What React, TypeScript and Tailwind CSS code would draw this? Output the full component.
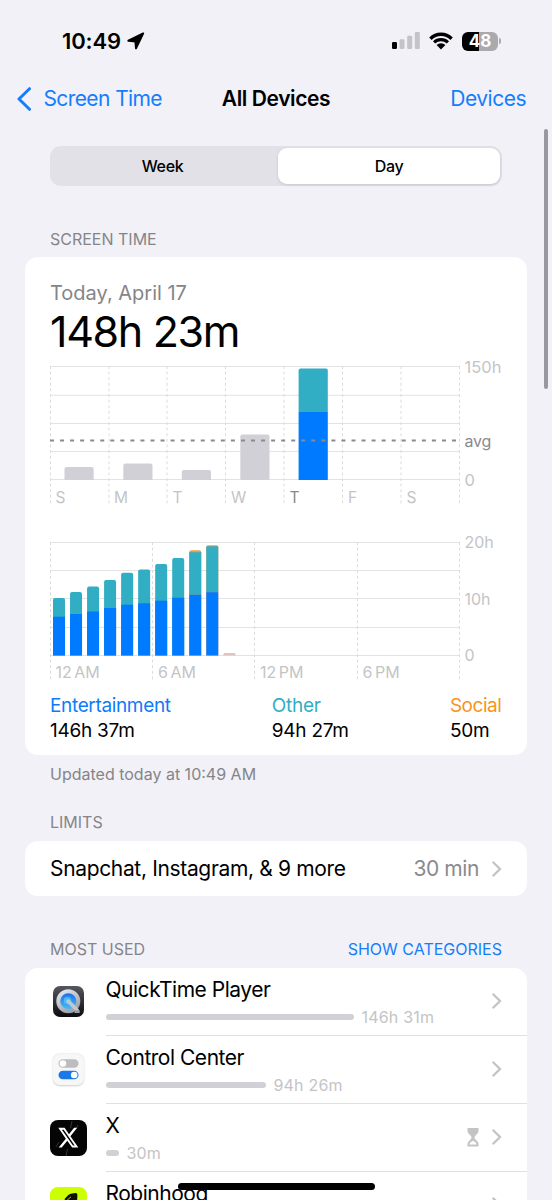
import type { ReactNode } from 'react';
import clsx from 'clsx';

const weekBars = [
  { x: 14.5, top: 107 },
  { x: 73.3, top: 103.5 },
  { x: 131.8, top: 110 },
  { x: 190.3, top: 74.5 },
];

const dayLabels = ['S', 'M', 'T', 'W', 'T', 'F', 'S'];

// top of the teal part, top of the blue part, height of the orange cap
const hourBars = [
  [62, 80.7, 0],
  [56, 78, 0],
  [50.5, 75.5, 0],
  [44, 72, 0],
  [36.8, 68.7, 0],
  [33.5, 67.3, 0],
  [28, 64.7, 0],
  [22, 61.7, 0],
  [14.2, 58.7, 2],
  [9.3, 56.2, 1],
];

function Chevron() {
  return (
    <svg width="10" height="16" viewBox="0 0 10 16" fill="none" className="shrink-0">
      <path d="M1.4 1.5L8.1 8L1.4 14.5" stroke="#c4c4c7" strokeWidth="2.4" strokeLinecap="round" strokeLinejoin="round" />
    </svg>
  );
}

function StatusBar() {
  return (
    <div className="flex h-[72px] items-center justify-between pt-[10px] pr-[51px] pl-[62px]">
      <div className="flex items-center gap-[6px]">
        <span className="text-[22px] leading-none font-semibold tracking-[-0.1px]">10:49</span>
        <svg width="18" height="18" viewBox="0 0 18 18">
          <path
            d="M16.2 1.4L1.4 8.7L8.4 9.4L9 16.3Z"
            fill="#000"
            stroke="#000"
            strokeWidth="2"
            strokeLinejoin="round"
          />
        </svg>
      </div>
      <div className="flex items-center">
        <svg width="28" height="18" viewBox="0 0 28 18">
          <rect x="0" y="10" width="5" height="7" rx="1.2" />
          <rect x="7.5" y="7.3" width="5" height="9.7" rx="1.2" fill="#c3c3c8" />
          <rect x="15.2" y="3.7" width="5" height="13.3" rx="1.2" fill="#c3c3c8" />
          <rect x="22.8" y="0" width="5" height="17" rx="1.2" fill="#c3c3c8" />
        </svg>
        <svg width="24" height="18" viewBox="0 0 24 18" fill="none" className="ml-[9px]">
          <path d="M1.4 6.7A15 15 0 0 1 22.6 6.7" stroke="#000" strokeWidth="3.4" />
          <path d="M5.1 10.4A9.8 9.8 0 0 1 18.9 10.4" stroke="#000" strokeWidth="3.2" />
          <path d="M7.6 13A6.2 6.2 0 0 1 16.4 13L12 17.4Z" fill="#000" />
        </svg>
        <div className="ml-[9px] h-[19px] w-[36px] rounded-[6px] bg-linear-to-r from-black from-48% to-[#a9a9ae] to-48% text-center text-[17px] leading-[19px] font-bold text-white">
          48
        </div>
        <div className="ml-[1px] h-[6px] w-[2px] rounded-r-full bg-[#a9a9ae]" />
      </div>
    </div>
  );
}

function WeekChart() {
  return (
    <svg width="452" height="150" viewBox="0 0 452 150" className="block overflow-visible">
      {[6.5, 35.3, 63.5, 91.5, 119.5].map((y) => (
        <path key={y} d={`M0 ${y}H410`} stroke="#e3e3e5" />
      ))}
      {[0.5, 59, 117, 175.5, 234, 292.5, 351, 409.5].map((x) => (
        <path key={x} d={`M${x} 6V145`} stroke="#dcdcde" strokeDasharray="3 2.6" />
      ))}
      {weekBars.map((bar) => (
        <path key={bar.x} d={`M${bar.x} 120V${bar.top + 2}q0 -2 2 -2h25.2q2 0 2 2V120Z`} fill="#d1d0d7" />
      ))}
      <path d="M248.6 52V10.5q0-2 2-2h25.2q2 0 2 2V52Z" fill="#31aec4" />
      <path d="M248.6 52h29.2v68h-29.2Z" fill="#007aff" />
      <path d="M0 80.5H407" stroke="#8a8a8e" strokeWidth="1.9" strokeDasharray="4 6.05" />
      {dayLabels.map((label, i) => (
        <text
          key={i}
          x={5.5 + i * 58.5}
          y="142.8"
          className={clsx('text-[15.5px]', i === 4 ? 'fill-[#8a8a8e]' : 'fill-[#c4c4c6]')}
        >
          {label}
        </text>
      ))}
      <g className="fill-[#c4c4c6] text-[16.5px]">
        <text x="414.5" y="13">150h</text>
        <text x="414.5" y="126">0</text>
      </g>
      <text x="414.5" y="86.5" className="fill-[#8a8a8e] text-[16px] tracking-[-0.2px]">avg</text>
    </svg>
  );
}

function HourChart() {
  return (
    <svg width="452" height="150" viewBox="0 0 452 150" className="block overflow-visible">
      {[6.5, 34.5, 62.5, 91.5, 119.5].map((y) => (
        <path key={y} d={`M0 ${y}H410`} stroke="#e3e3e5" />
      ))}
      {[0.5, 102.5, 204.5, 307.5, 409.5].map((x) => (
        <path key={x} d={`M${x} 6V144`} stroke="#dcdcde" strokeDasharray="3 2.6" />
      ))}
      {hourBars.map(([top, mid, cap], i) => {
        const x = 3 + i * 17.03;
        return (
          <g key={i}>
            <path
              d={`M${x} 119.5V${top + 2}q0 -2 2 -2h8q2 0 2 2V119.5Z`}
              fill={cap ? '#f39a4a' : '#31aec4'}
            />
            {cap > 0 && <rect x={x} y={top + cap} width="12" height={mid - top - cap} fill="#31aec4" />}
            <rect x={x} y={mid} width="12" height={119.5 - mid} fill="#007aff" />
          </g>
        );
      })}
      <path d="M173.3 119.5v-.8q0-1.7 1.7-1.7h9q1.7 0 1.7 1.7v.8Z" fill="#e0c4bb" />
      <g className="fill-[#c4c4c6] text-[16px] [word-spacing:-2px]">
        <text x="5.5" y="142.3">12 AM</text>
        <text x="108" y="142.3">6 AM</text>
        <text x="210" y="142.3">12 PM</text>
        <text x="312.5" y="142.3">6 PM</text>
      </g>
      <g className="fill-[#c4c4c6] text-[16px]">
        <text x="414.5" y="12.3">20h</text>
        <text x="414.5" y="68.6">10h</text>
        <text x="414.5" y="125.3">0</text>
      </g>
    </svg>
  );
}

function QuickTimeIcon() {
  return (
    <svg width="31" height="31" viewBox="0 0 31 31">
      <defs>
        <linearGradient id="qt-bg" x1="0" y1="0" x2="0" y2="1">
          <stop offset="0" stopColor="#56585f" />
          <stop offset="1" stopColor="#0b0b0e" />
        </linearGradient>
        <linearGradient id="qt-ring" x1="0" y1="0" x2="0.6" y2="1">
          <stop offset="0" stopColor="#e6eaf0" />
          <stop offset="1" stopColor="#a0a3a9" />
        </linearGradient>
        <linearGradient id="qt-core" x1="0" y1="0" x2="0" y2="1">
          <stop offset="0" stopColor="#1668e8" />
          <stop offset="1" stopColor="#4cc4f7" />
        </linearGradient>
      </defs>
      <rect width="31" height="31" rx="7" fill="url(#qt-bg)" />
      <circle cx="15.3" cy="15.2" r="10" fill="url(#qt-core)" stroke="url(#qt-ring)" strokeWidth="4" />
      <circle cx="14.5" cy="14.5" r="3.8" fill="#62d4fb" opacity=".6" />
      <path d="M15.2 15.2L24 24" stroke="#c3c6cc" strokeWidth="3.8" strokeLinecap="round" />
      <path d="M21.5 25.6h5.2" stroke="#9a9ca2" strokeWidth="2.6" />
    </svg>
  );
}

function ControlCenterIcon() {
  return (
    <svg width="31" height="31" viewBox="0 0 31 31" className="rounded-[7px] bg-[#f7f7f8] shadow-[0_0.5px_2px_rgba(0,0,0,0.2)]">
      <rect x="5.5" y="5.3" width="20" height="8.5" rx="4.25" fill="#bdbdbf" />
      <circle cx="9.9" cy="9.55" r="3.3" fill="#fff" />
      <rect x="5.5" y="16.7" width="20" height="8.5" rx="4.25" fill="#1a78e8" />
      <circle cx="21.2" cy="20.95" r="3.3" fill="#fff" />
    </svg>
  );
}

function XIcon() {
  return (
    <svg width="37" height="36" viewBox="0 0 37 36">
      <rect width="37" height="36" rx="8" fill="#050505" />
      <path d="M22 1L20.5 8M16 36L17.5 29M28 5L26 9M6 27L9 22" stroke="#555" strokeWidth=".6" />
      <path
        transform="translate(7.1 5.6) scale(0.93 1.01)"
        fill="#fff"
        fillRule="evenodd"
        d="M18.244 2.25h3.308l-7.227 8.26 8.502 11.24H16.17l-5.214-6.817L4.99 21.75H1.68l7.73-8.835L1.254 2.25H8.08l4.713 6.231zm-1.161 17.52h1.833L7.084 4.126H5.117z"
      />
    </svg>
  );
}

function RobinhoodIcon() {
  return (
    <svg width="37" height="37" viewBox="0 0 37 37">
      <rect width="37" height="37" rx="8" fill="#ccff00" />
      <path d="M15 11.5L18.3 7.9Q19.8 6.6 22 6.4L25.8 6.1Q27.6 6.3 27.4 8.6L27 16L20 22L12 31Q12.500 20 15 11.500Z" fill="#110e08" />
      <path d="M21 9.8Q16.500 12 13.500 20" fill="none" stroke="#ccff00" strokeWidth=".8" />
    </svg>
  );
}

function Hourglass() {
  return (
    <svg width="12" height="19" viewBox="0 0 12 19" fill="none">
      <path
        d="M.5 0H11.5V3C11.5 6.2 7.5 7.2 7.5 9.5C7.5 11.8 11.5 12.8 11.5 16V18.5H.5V16C.5 12.8 4.5 11.8 4.5 9.5C4.5 7.2 .5 6.2 .5 3Z"
        fill="#c4c4c7"
      />
      <path d="M2.5 16.5C2.5 14.5 4.5 14 6 12.8C7.5 14 9.5 14.5 9.5 16.5Z" fill="#fff" />
    </svg>
  );
}

type AppRowProps = {
  icon: ReactNode;
  name: string;
  barClass: string;
  time?: string;
  limited?: boolean;
};

function AppRow({ icon, name, barClass, time, limited }: AppRowProps) {
  return (
    <div className="flex h-[67.9px] shrink-0 pl-[25px]">
      <div className="flex w-[37px] shrink-0 items-center justify-center">{icon}</div>
      <div className="ml-[18.5px] flex flex-1 items-center border-b border-[#e0e0e2] pr-[25px]">
        <div className="flex h-full flex-1 flex-col pt-[8px]">
          <div className="text-[21px] leading-[28px] tracking-[-0.48px]">{name}</div>
          <div className="flex h-[26px] items-center gap-[8px]">
            <div className={clsx('h-[6px] rounded-full bg-[#d1d0d7]', barClass)} />
            <span className="text-[16px] leading-none tracking-[0.18px] text-[#c4c4c6]">{time}</span>
          </div>
        </div>
        <div className="flex items-center gap-[13px]">
          {limited && <Hourglass />}
          <Chevron />
        </div>
      </div>
    </div>
  );
}

export default function App() {
  return (
    <div className="relative h-[1200px] w-[552px] overflow-hidden bg-[#f2f1f8] font-['Inter',sans-serif] text-black">
      <StatusBar />

      <div className="flex h-[53px] items-center pr-[26px] pl-[16.5px] text-[21px] tracking-[-0.5px]">
        <div className="flex w-[184.5px] items-center gap-[12px] text-[#147efb]">
          <svg width="15" height="24" viewBox="0 0 15 24" fill="none">
            <path d="M12.5 1.7L2 12L12.5 22.3" stroke="#147efb" strokeWidth="3" strokeLinecap="round" strokeLinejoin="round" />
          </svg>
          <span className="whitespace-nowrap tracking-[-0.6px]">Screen Time</span>
        </div>
        <div className="flex-1 text-center font-semibold tracking-[-0.4px]">All Devices</div>
        <div className="w-[175px] text-right text-[#147efb]">Devices</div>
      </div>

      <div className="mx-[50px] mt-[21px] flex h-[40px] rounded-[11px] bg-[#e2e1e7] p-[2px] text-[16px] font-medium tracking-[-0.35px]">
        <div className="w-[226px] pr-[5px] text-center leading-[36px]">Week</div>
        <div className="flex-1 rounded-[9px] bg-white text-center leading-[36px] shadow-[0_1px_3px_rgba(0,0,0,0.12)]">Day</div>
      </div>

      <div className="mt-[42px] pl-[50px] text-[16px] leading-[22px] text-[#858589]">SCREEN TIME</div>

      <div className="mx-[25px] mt-[7px] h-[498px] rounded-[13px] bg-white pt-[22px] pl-[25px]">
        <div className="text-[20px] leading-[28px] text-[#858589]">Today, April 17</div>
        <div className="text-[43px] leading-[48px] tracking-[-1.35px]">148h 23m</div>
        <div className="mt-[5px]">
          <WeekChart />
        </div>
        <div className="mt-[26px]">
          <HourChart />
        </div>
        <div className="mt-[7px] mr-[25.5px] flex justify-between text-[19px] leading-[25px] tracking-[-0.25px]">
          <div>
            <div className="tracking-[-0.35px] text-[#0f7bfb]">Entertainment</div>
            <div>146h 37m</div>
          </div>
          <div>
            <div className="text-[#31aec4]">Other</div>
            <div>94h 27m</div>
          </div>
          <div>
            <div className="tracking-[-0.45px] text-[#f7941d]">Social</div>
            <div>50m</div>
          </div>
        </div>
      </div>

      <div className="mt-[8px] pl-[50px] text-[16px] leading-[22px] text-[#858589]">
        Updated today at 10:49 AM
      </div>

      <div className="mt-[26px] pl-[50px] text-[16px] leading-[22px] text-[#858589]">LIMITS</div>
      <div className="mx-[25px] mt-[8px] flex h-[55px] items-center rounded-[13px] bg-white px-[25px] text-[21px]">
        <div className="flex-1 tracking-[-0.34px]">Snapchat, Instagram, &amp; 9 more</div>
        <div className="mr-[13px] tracking-[-0.4px] text-[#8a8a8e]">30 min</div>
        <Chevron />
      </div>

      <div className="mx-[50px] mt-[42px] flex justify-between text-[16px] leading-[22px] text-[#858589]">
        <div>MOST USED</div>
        <div className="text-[#147efb]">SHOW CATEGORIES</div>
      </div>
      <div className="mx-[25px] mt-[8px] flex h-[232px] flex-col overflow-hidden rounded-t-[13px] bg-white">
        <AppRow icon={<QuickTimeIcon />} name="QuickTime Player" barClass="w-[248px]" time="146h 31m" />
        <AppRow icon={<ControlCenterIcon />} name="Control Center" barClass="w-[160px]" time="94h 26m" />
        <AppRow icon={<XIcon />} name="X" barClass="w-[13px]" time="30m" limited />
        <AppRow icon={<RobinhoodIcon />} name="Robinhood" barClass="w-[10px]" />
      </div>

      <div className="absolute top-[129px] left-[544px] h-[260px] w-[4px] rounded-full bg-[#99989e]" />
      <div className="absolute top-[1183px] left-[178px] h-[7px] w-[197px] rounded-full bg-black" />
    </div>
  );
}
